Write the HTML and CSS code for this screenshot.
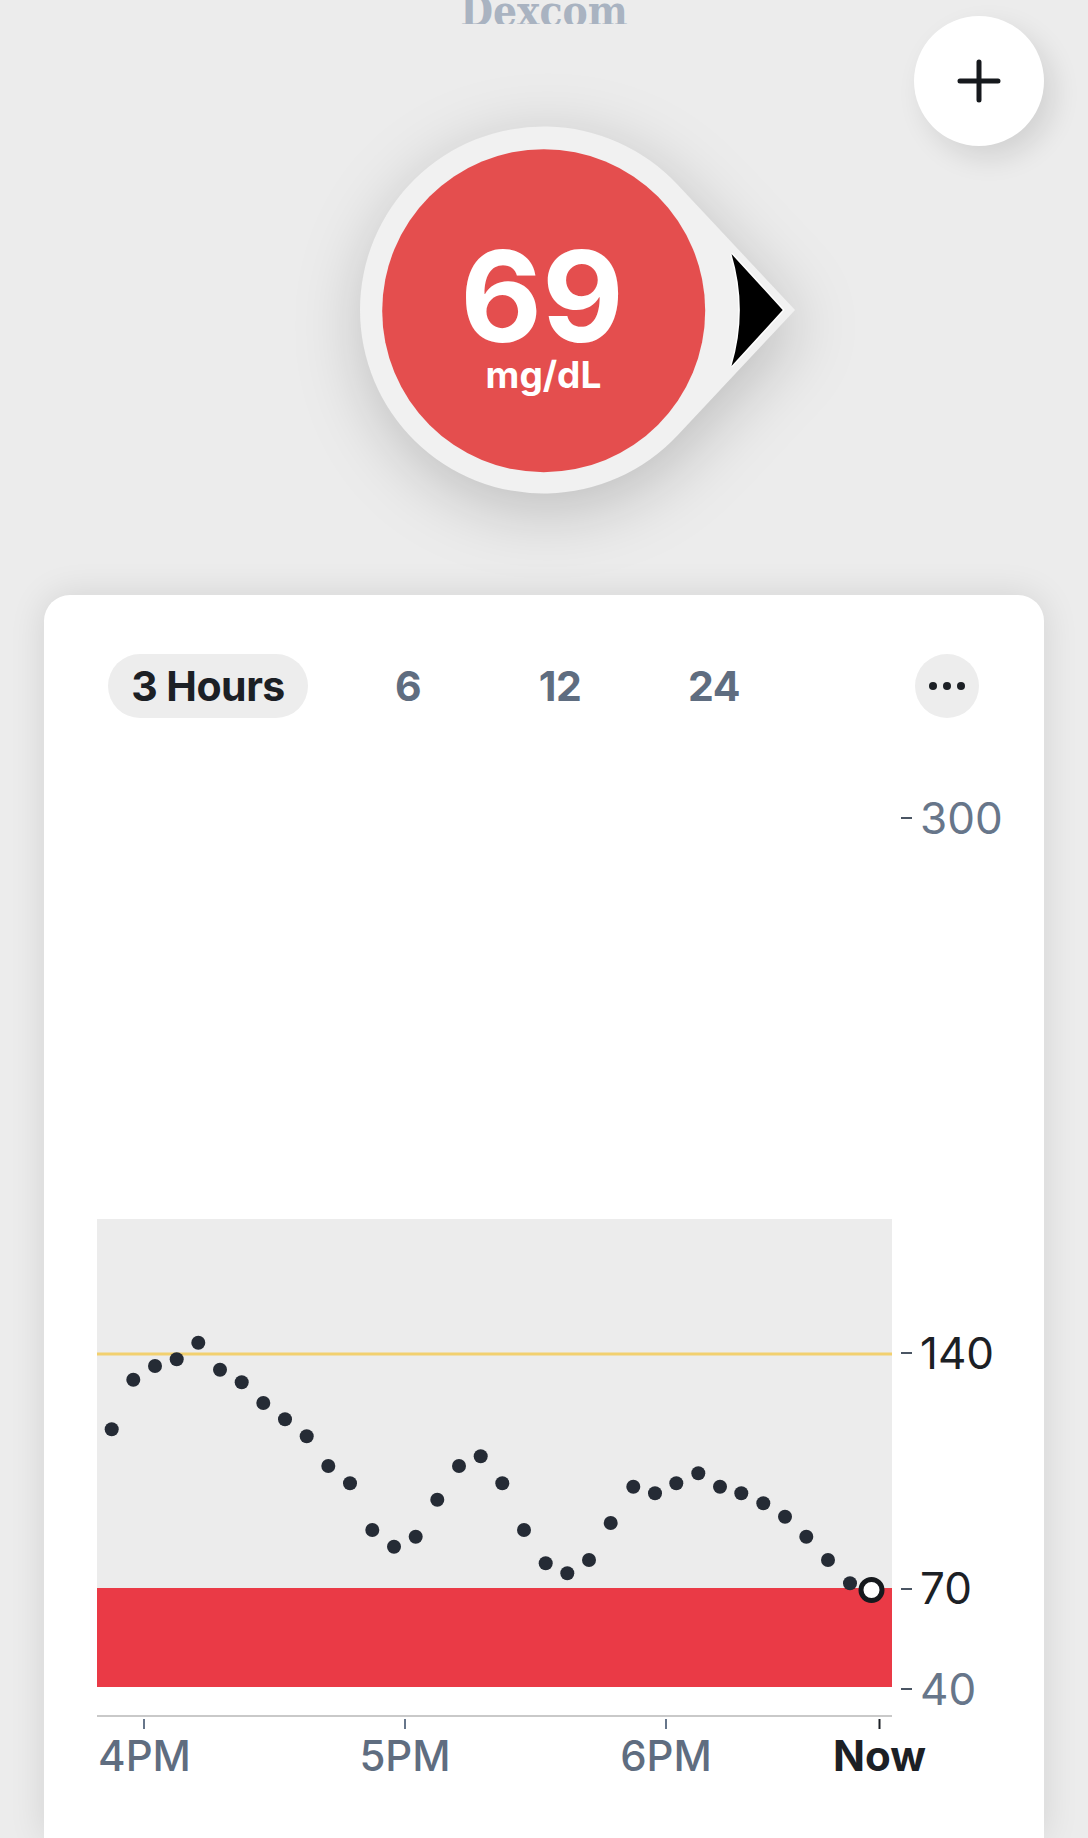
FILE: index.html
```html
<!DOCTYPE html>
<html>
<head>
    <title>Dexcom</title>
    <link rel="stylesheet" href="styles.css">
</head>
<body>
    <div class="top">
        <div class="logo">Dexcom</div>
        <button class="add-btn" aria-label="Add">
            <svg width="44" height="44" viewBox="0 0 44 44">
                <path d="M22 3V41M3 22H41" />
            </svg>
        </button>
        <svg class="reading" width="520" height="460" viewBox="284 100 520 460">
            <path class="drop" d="M677.4 184.5L795 310L677.4 435.5A183.5 183.5 0 1 1 677.4 184.5Z" />
            <path class="arrow" d="M731.5 254L782.7 310L731.5 366A196 196 0 0 0 731.5 254Z" />
            <circle class="value-bg" cx="543.7" cy="310.7" r="161.5" />
            <text class="value" x="542" y="342">69</text>
            <text class="unit" x="543.5" y="388">mg/dL</text>
        </svg>
    </div>

    <div class="card">
        <div class="tabs">
            <div class="tab active">3 Hours</div>
            <div class="tab">6</div>
            <div class="tab">12</div>
            <div class="tab">24</div>
            <div class="more"><span></span><span></span><span></span></div>
        </div>

        <svg class="chart" width="1000" height="1068" viewBox="44 770 1000 1068">
            <rect class="plot" x="97" y="1219" width="795" height="369" />
            <rect class="low" x="97" y="1588" width="795" height="99" />
            <rect class="high" x="97" y="1352.5" width="795" height="3" />

            <g class="dots">
                <circle cx="111.7" cy="1429.3" r="7" />
                <circle cx="133.3" cy="1379.7" r="7" />
                <circle cx="155" cy="1366" r="7" />
                <circle cx="176.7" cy="1359.3" r="7" />
                <circle cx="198.3" cy="1342.7" r="7" />
                <circle cx="220" cy="1369.7" r="7" />
                <circle cx="241.7" cy="1382.3" r="7" />
                <circle cx="263.3" cy="1403" r="7" />
                <circle cx="285" cy="1419.3" r="7" />
                <circle cx="306.7" cy="1436.3" r="7" />
                <circle cx="328.3" cy="1466" r="7" />
                <circle cx="350" cy="1483.3" r="7" />
                <circle cx="372.3" cy="1530" r="7" />
                <circle cx="394" cy="1546.7" r="7" />
                <circle cx="415.7" cy="1536.7" r="7" />
                <circle cx="437.3" cy="1499.7" r="7" />
                <circle cx="459" cy="1466" r="7" />
                <circle cx="480.7" cy="1456.3" r="7" />
                <circle cx="502.3" cy="1483.3" r="7" />
                <circle cx="524" cy="1530" r="7" />
                <circle cx="545.7" cy="1563.3" r="7" />
                <circle cx="567.3" cy="1573.3" r="7" />
                <circle cx="589" cy="1560" r="7" />
                <circle cx="610.7" cy="1523" r="7" />
                <circle cx="633.3" cy="1486.7" r="7" />
                <circle cx="655" cy="1493.3" r="7" />
                <circle cx="676.3" cy="1483.3" r="7" />
                <circle cx="698.3" cy="1473.3" r="7" />
                <circle cx="720" cy="1486.7" r="7" />
                <circle cx="741.3" cy="1493.3" r="7" />
                <circle cx="763.3" cy="1503.3" r="7" />
                <circle cx="785" cy="1516.7" r="7" />
                <circle cx="806.3" cy="1536.7" r="7" />
                <circle cx="828" cy="1560" r="7" />
                <circle cx="850" cy="1583.3" r="7" />
            </g>
            <circle class="current" cx="871.5" cy="1590" r="10.5" />

            <!-- y axis -->
            <g class="y-ticks">
                <path d="M901 818H912" />
                <path d="M901 1353H912" />
                <path d="M901 1589H912" />
                <path d="M901 1689H912" />
            </g>
            <text class="y-label" x="920" y="834">300</text>
            <text class="y-label dark" x="920" y="1369">140</text>
            <text class="y-label dark" x="920" y="1604">70</text>
            <text class="y-label" x="920" y="1705">40</text>

            <!-- x axis -->
            <rect class="axis" x="97" y="1715" width="795" height="2" />
            <g class="x-ticks">
                <path d="M144 1719V1729" />
                <path d="M405 1719V1729" />
                <path d="M666 1719V1729" />
                <path class="dark" d="M879.5 1719V1729" />
            </g>
            <text class="x-label" x="144.500" y="1771">4PM</text>
            <text class="x-label" x="405" y="1771">5PM</text>
            <text class="x-label" x="666" y="1771">6PM</text>
            <text class="x-label now" x="879.5" y="1771">Now</text>
        </svg>
    </div>
</body>
</html>
```

FILE: styles.css
```css
html, body {
    margin: 0;
    padding: 0;
}

body {
    font-family: Inter, "Liberation Sans", sans-serif;
    background-color: #ececec;
    height: 1838px;
    overflow: hidden;
}

.top {
    position: relative;
    height: 595px;
}

.logo {
    height: 24px;
    line-height: 24px;
    text-align: center;
    font-family: "DejaVu Serif", serif;
    font-stretch: condensed;
    font-size: 42px;
    font-weight: bold;
    color: #a9b3c1;
    overflow: hidden;
}

.add-btn {
    position: absolute;
    top: 16px;
    right: 44px;
    width: 130px;
    height: 130px;
    padding: 0;
    border: none;
    border-radius: 50%;
    background-color: #fff;
    box-shadow: 10px 12px 28px rgba(0, 0, 0, 0.11);
    display: flex;
    align-items: center;
    justify-content: center;
}

.add-btn path {
    fill: none;
    stroke: #16191d;
    stroke-width: 5;
    stroke-linecap: round;
}

.reading {
    display: block;
    margin: 76px 0 0 284px;
    overflow: visible;
}

.drop {
    fill: #f1f1f1;
    filter: drop-shadow(4px 16px 34px rgba(0, 0, 0, 0.2));
}

.arrow {
    fill: #000;
    stroke: #fff;
    stroke-width: 3;
    paint-order: stroke;
}

.value-bg {
    fill: #e44e4e;
}

.value {
    fill: #fff;
    font-size: 126px;
    font-weight: 700;
    text-anchor: middle;
}

.unit {
    fill: #fff;
    font-size: 37px;
    font-weight: 700;
    text-anchor: middle;
}

.card {
    margin: 0 44px;
    height: 1243px;
    background-color: #fff;
    border-radius: 26px 26px 0 0;
    box-shadow: 0 0 36px rgba(0, 0, 0, 0.11);
    overflow: hidden;
}

.tabs {
    display: grid;
    grid-template-columns: 200px 200px 104px 204px 1fr;
    align-items: center;
    padding: 59px 65px 0 64px;
}

.tab {
    height: 64px;
    line-height: 64px;
    text-align: center;
    font-size: 41px;
    font-weight: 700;
    letter-spacing: -0.5px;
    color: #5f6d80;
}

.tab.active {
    background-color: #ededed;
    border-radius: 32px;
    color: #1c2025;
}

.more {
    justify-self: end;
    width: 64px;
    height: 64px;
    border-radius: 50%;
    background-color: #ededed;
    display: flex;
    align-items: center;
    justify-content: center;
    gap: 6px;
}

.more span {
    width: 8px;
    height: 8px;
    border-radius: 50%;
    background-color: #1c2025;
}

.chart {
    display: block;
    margin-top: 52px;
}

.plot { fill: #ececec; }
.low { fill: #ea3a46; }
.high { fill: #f2d06f; }
.axis { fill: #c9c9c9; }

.dots circle { fill: #252b35; }

.current {
    fill: #fff;
    stroke: #16191d;
    stroke-width: 5;
}

.y-ticks path {
    stroke: #4a5563;
    stroke-width: 2;
}

.x-ticks path {
    stroke: #67768a;
    stroke-width: 2;
}

.x-ticks path.dark { stroke: #1c2025; }

.y-label {
    fill: #67768a;
    font-size: 44px;
}

.y-label.dark { fill: #1c2025; }

.x-label {
    fill: #5f6d80;
    font-size: 42px;
    font-weight: 500;
    text-anchor: middle;
}

.x-label.now {
    fill: #1c2025;
    font-weight: 700;
}
```
